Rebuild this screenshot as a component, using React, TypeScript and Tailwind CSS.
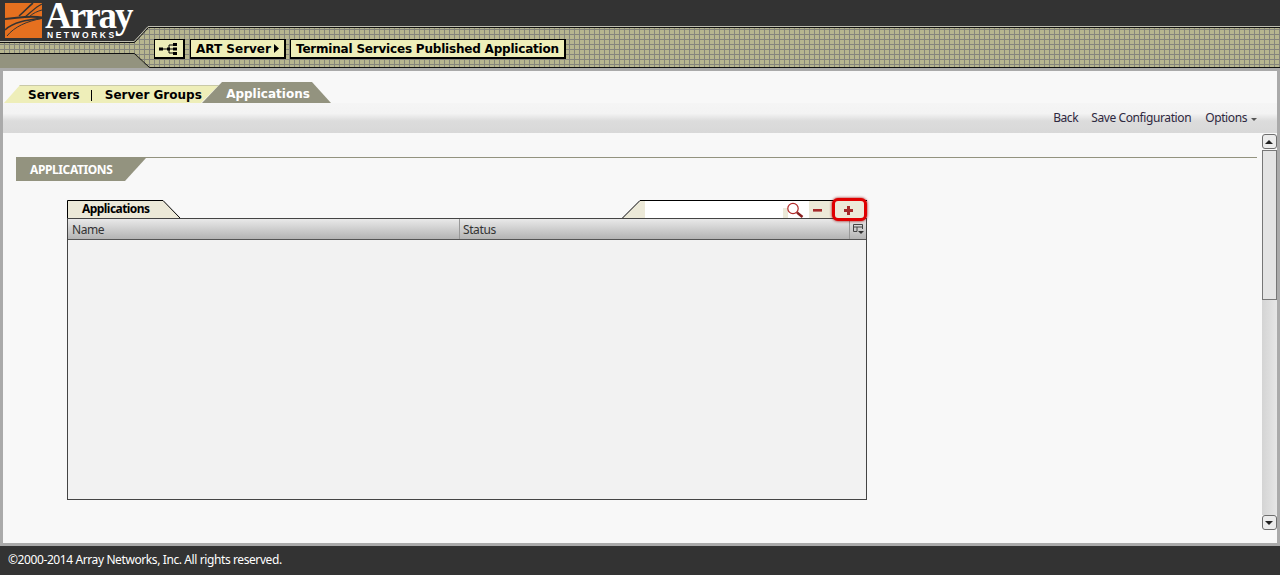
import React from "react";

const sans = "font-['Noto_Sans','Open_Sans',sans-serif] tracking-[-0.4px]";
const verd = "font-['DejaVu_Sans',sans-serif] tracking-normal";

function HeaderArt() {
  return (
    <svg className="absolute inset-0" width="1280" height="68" aria-hidden="true">
      <defs>
        <pattern id="grid" x="0" y="0" width="5" height="5" patternUnits="userSpaceOnUse">
          <rect width="5" height="5" fill="#b7b68f" />
          <path d="M0 4.5H5M4.5 0V5" stroke="#85857c" strokeWidth="1" />
        </pattern>
      </defs>
      <path d="M0 54H134L149 68H0Z" fill="#93937f" />
      <path d="M0 42H134L148 27H1280V68H149L134 54H0Z" fill="url(#grid)" />
      <path d="M0 41.5H134L148 26.5H1280" fill="none" stroke="#bdbdb0" strokeWidth="1" />
      <path d="M0 42.5H134.5L148.5 27.5H1280" fill="none" stroke="#111" strokeWidth="1" />
      <path d="M0 53.5H134.5L149.5 67.5H1280" fill="none" stroke="#111" strokeWidth="1" />
    </svg>
  );
}

function Logo() {
  return (
    <svg className="absolute left-[5px] top-[3px]" width="38" height="36" viewBox="0 0 38 36" aria-hidden="true">
      <rect width="37" height="35" fill="#e5701f" />
      <path d="M0 16C14 15 24 12 37 14.5" stroke="#333" strokeWidth="2" fill="none" />
      <path d="M0 27C8 19 22 17 37 15" stroke="#333" strokeWidth="1.4" fill="none" />
      <path d="M2 33C9 24 22 18 37 15.5" stroke="#333" strokeWidth="1" fill="none" />
      <path d="M14 13C20 8 24 3 28 0" stroke="#333" strokeWidth="1.6" fill="none" />
      <path d="M20 14C26 9 32 3 37 1" stroke="#333" strokeWidth="1.2" fill="none" />
      <path d="M24 14C28 10 33 8 37 7" stroke="#333" strokeWidth="1" fill="none" />
    </svg>
  );
}

function Crumb({ children, className = "" }: { children: React.ReactNode; className?: string }) {
  return (
    <div className={`h-[20px] flex items-center whitespace-nowrap bg-[#eeeeb9] border border-black border-r-2 border-b-2 text-black font-bold text-[12px] leading-none ${verd} ${className}`}>
      {children}
    </div>
  );
}

function TreeIcon() {
  return (
    <svg width="20" height="14" viewBox="0 0 20 14" aria-hidden="true">
      <path d="M3 7H10M10 3V11M10 3H14M10 7H14M10 11H14" stroke="#000" strokeWidth="1" fill="none" />
      <rect x="0" y="5.5" width="4" height="3" fill="#000" />
      <rect x="8" y="5.5" width="3" height="3" fill="#000" />
      <rect x="14" y="1" width="4" height="3" fill="#000" />
      <rect x="14" y="5.5" width="4" height="3" fill="#000" />
      <rect x="14" y="10" width="4" height="3" fill="#000" />
    </svg>
  );
}

function ScrollBtn({ down = false }: { down?: boolean }) {
  return (
    <div className="w-[15px] h-[15px] bg-[#ececec] border border-[#6e6e6e] rounded-[3px] flex items-center justify-center shrink-0">
      <svg width="9" height="6" viewBox="0 0 9 6" aria-hidden="true">
        <path d={down ? "M0 1H8L4 5Z" : "M0 5H8L4 1Z"} fill="#222" />
      </svg>
    </div>
  );
}

export default function App() {
  return (
    <div className={`w-[1280px] h-[575px] overflow-hidden flex flex-col bg-[#333333] ${sans}`}>
      <header className="relative h-[68px] shrink-0 pl-[154px] pt-[39px]">
        <HeaderArt />
        <Logo />
        <div className="absolute left-[45px] top-[1px] text-white text-[37px] leading-[30px] font-bold font-['Liberation_Serif',serif] tracking-[-2px]">
          Array
        </div>
        <div className="absolute left-[47px] top-[31px] text-white text-[8.5px] leading-[9px] font-bold font-['Liberation_Sans',sans-serif] tracking-[2.5px]">
          NETWORKS
        </div>
        <div className="relative flex gap-[4px]">
          <Crumb className="w-[31px] mr-[1px] justify-center"><TreeIcon /></Crumb>
          <Crumb className="w-[96px] pl-[5px] gap-[3px]">
            <span>ART Server</span>
            <svg width="5" height="9" viewBox="0 0 5 9" aria-hidden="true"><path d="M0 0L5 4.5L0 9Z" fill="#000" /></svg>
          </Crumb>
          <Crumb className="w-[276px] pl-[5px]"><span className="tracking-[-0.2px]">Terminal Services Published Application</span></Crumb>
        </div>
      </header>

      <main className="h-[478px] shrink-0 bg-[#f8f8f8] border-x-[3px] border-t-[3px] border-b-[3px] border-[#aaaaaa] flex flex-col">
        <div className="h-[11px] shrink-0" />
        {/* tabs */}
        <div className="h-[21px] shrink-0 flex items-end pl-[1px]">
          <div className={`relative z-0 w-[215px] h-[18px] bg-[#eeeeb9] shadow-[inset_0_1px_0_#c9c9a8] pt-[2px] flex items-center whitespace-nowrap [clip-path:polygon(0_100%,16px_0,100%_0,197px_100%)] text-black font-bold text-[12px] leading-none ${verd}`}>
            <span className="ml-[24px]">Servers</span>
            <span className="ml-[11px] w-px h-[11px] bg-black" />
            <span className="ml-[13px]">Server Groups</span>
          </div>
          <div className={`relative z-10 -ml-[17px] w-[129px] h-[21px] pt-[2px] pl-[3px] bg-[#93937f] [clip-path:polygon(0_100%,20px_0,110px_0,100%_100%)] text-white font-bold text-[12px] leading-none flex items-center justify-center whitespace-nowrap ${verd}`}>
            Applications
          </div>
        </div>
        {/* toolbar */}
        <div className="h-[30px] shrink-0 bg-[linear-gradient(#f5f5f5_0%,#f3f3f3_35%,#dcdcdc_60%,#d8d8d8_100%)] flex items-center justify-end pr-[20px] text-[12px] text-[#2e2840] leading-none">
          <span>Back</span>
          <span className="ml-[13px]">Save Configuration</span>
          <span className="ml-[14px]">Options</span>
          <span className="ml-[4px] w-0 h-0 border-x-[3px] border-x-transparent border-t-[3px] border-t-[#555] mt-[2px]" />
        </div>
        {/* content */}
        <div className="flex-1 flex min-h-0">
          <div className="flex-1 min-w-0 pl-[13px] pr-[5px] pt-[24px]">
            <div className="border-t border-[#93937f]">
              <div className="w-[130px] h-[23px] bg-[#93937f] text-white text-[12px] font-bold flex items-center pl-[14px] [clip-path:polygon(0_0,100%_0,109px_100%,0_100%)]">
                APPLICATIONS
              </div>
            </div>
            <div className="ml-[51px] mt-[19px] w-[800px]">
              <div className="relative h-[18px] flex justify-between">
                <div className="relative w-[114px] h-[18px]">
                  <svg className="absolute inset-0" width="114" height="18" aria-hidden="true">
                    <path d="M0.5 18V0.5H96L113 18" fill="#ece9d8" stroke="#000" strokeWidth="1" />
                  </svg>
                  <span className="absolute left-[15px] top-[1px] text-[12px] leading-[16px] font-bold text-black tracking-[-0.55px]">Applications</span>
                </div>
                <div className="relative w-[245px] h-[18px]">
                  <svg className="absolute inset-0" width="245" height="18" aria-hidden="true">
                    <path d="M1 18L18 1H245V18H1Z" fill="#ece9d8" />
                    <path d="M23 1H161V18H23Z M166 1H187V18H166Z M161 1H166V8H161Z" fill="#fff" />
                    <path d="M0.5 18L18 0.5H245" fill="none" stroke="#000" strokeWidth="1" />
                    <circle cx="171" cy="8.5" r="5.2" fill="#fff" stroke="#b02828" strokeWidth="1.2" />
                    <path d="M175 12.5L180.5 17" stroke="#8a2020" strokeWidth="2.4" />
                    <rect x="191" y="9" width="9" height="2.6" fill="#a52a2a" />
                  </svg>
                  <div className="absolute left-[210px] top-[-2px] w-[35px] h-[23px] pt-[1px] pr-[2px] bg-[#ece9d8] border-[3px] border-[#e00000] rounded-[6px] shadow-[0_0_3px_#900] flex items-center justify-center">
                    <svg width="9" height="9" viewBox="0 0 9 9" aria-hidden="true">
                      <path d="M3 0H6V3H9V6H6V9H3V6H0V3H3Z" fill="#a52a2a" />
                    </svg>
                  </div>
                </div>
              </div>
              <div className="h-[282px] border border-[#444] bg-[#f2f2f2] flex flex-col">
                <div className="h-[21px] shrink-0 border-b border-[#555] bg-[linear-gradient(#e9e9e9,#b4b4b4)] flex text-[12px] leading-none text-[#333]">
                  <div className="w-[392px] border-r border-[#999] flex items-center pl-[4px] pt-[1px]">Name</div>
                  <div className="flex-1 border-r border-[#999] flex items-center pl-[3px] pt-[1px]">Status</div>
                  <div className="w-[16px] flex items-center justify-center">
                    <svg width="11" height="11" viewBox="0 0 11 11" aria-hidden="true">
                      <path d="M0.5 7.5V0.5H9.5V5M0.5 3H9.5M4 3V7.5H0.5" fill="none" stroke="#444" strokeWidth="1" />
                      <path d="M5 7H11L8 10Z" fill="#333" />
                    </svg>
                  </div>
                </div>
              </div>
            </div>
          </div>
          <div className="w-[15px] shrink-0 pt-[1px] h-[397px] flex flex-col">
            <ScrollBtn />
            <div className="h-[150px] shrink-0 mt-[1px] bg-[#e4e4e4] border border-[#777]" />
            <div className="flex-1 bg-[linear-gradient(90deg,#d4d4d4,#e6e6e6)]" />
            <ScrollBtn down />
          </div>
        </div>
      </main>

      <footer className="h-[29px] shrink-0 flex items-center pl-[8px] pb-[2px] text-white text-[12px] leading-none">
        ©2000-2014 Array Networks, Inc. All rights reserved.
      </footer>
    </div>
  );
}
